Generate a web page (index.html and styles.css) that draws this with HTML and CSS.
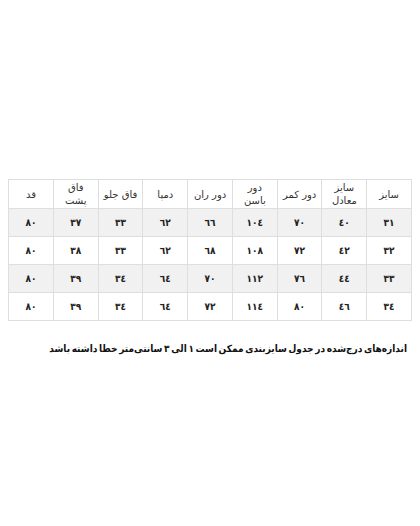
FILE: index.html
```html
<!DOCTYPE html>
<html lang="fa" dir="rtl">
<head>
<meta charset="utf-8">
<link rel="stylesheet" href="styles.css">
</head>
<body>
<div class="page">
  <table class="sizes">
    <thead>
      <tr>
        <th>سایز</th>
        <th>سایز<br>معادل</th>
        <th>دور کمر</th>
        <th>دور<br>باسن</th>
        <th>دور ران</th>
        <th>دمپا</th>
        <th>فاق جلو</th>
        <th>فاق<br>پشت</th>
        <th>قد</th>
      </tr>
    </thead>
    <tbody>
      <tr class="alt"><td>۳۱</td><td>٤۰</td><td>۷۰</td><td>۱۰٤</td><td>٦٦</td><td>٦۲</td><td>۳۳</td><td>۳۷</td><td>۸۰</td></tr>
      <tr><td>۳۲</td><td>٤۲</td><td>۷۲</td><td>۱۰۸</td><td>٦۸</td><td>٦۲</td><td>۳۳</td><td>۳۸</td><td>۸۰</td></tr>
      <tr class="alt"><td>۳۳</td><td>٤٤</td><td>۷٦</td><td>۱۱۲</td><td>۷۰</td><td>٦٤</td><td>۳٤</td><td>۳۹</td><td>۸۰</td></tr>
      <tr><td>۳٤</td><td>٤٦</td><td>۸۰</td><td>۱۱٤</td><td>۷۲</td><td>٦٤</td><td>۳٤</td><td>۳۹</td><td>۸۰</td></tr>
    </tbody>
  </table>
  <p class="note">اندازه‌های درج‌شده در جدول سایزبندی ممکن است ۱ الی ۳ سانتی‌متر خطا داشته باشد</p>
</div>
</body>
</html>
```
FILE: styles.css
```css
html, body {
  margin: 0;
  padding: 0;
  background: #ffffff;
}
body {
  font-family: "DejaVu Sans", "Noto Sans", sans-serif;
  color: #222;
  width: 420px;
  height: 526px;
}
.page {
  padding: 179px 8px 0 8px;
}
.sizes {
  width: 404px;
  border-collapse: collapse;
  table-layout: fixed;
}
.sizes th, .sizes td {
  border: 1px solid #dedede;
  text-align: center;
  vertical-align: middle;
  padding: 0;
}
.sizes th {
  height: 28px;
  font-size: 10px;
  font-weight: normal;
  line-height: 13px;
  color: #333;
}
.sizes td {
  height: 27px;
  font-family: "DejaVu Sans Condensed", "DejaVu Sans", sans-serif;
  font-stretch: condensed;
  font-size: 10px;
  font-weight: bold;
  color: #222;
}
.sizes tr.alt td {
  background: #f1f1f1;
}
.note {
  margin: 22px 5px 0 0;
  font-family: "DejaVu Sans Condensed", "DejaVu Sans", sans-serif;
  font-stretch: condensed;
  font-size: 10px;
  word-spacing: -1.5px;
  font-weight: bold;
  color: #111;
  text-align: right;
  white-space: nowrap;
}
```
